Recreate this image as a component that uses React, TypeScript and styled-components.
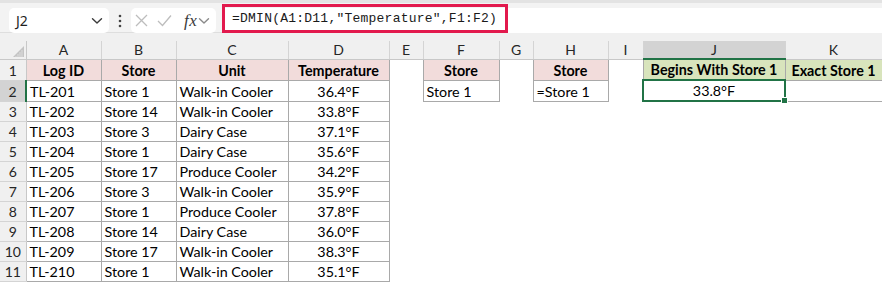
import React from "react";
import styled, { createGlobalStyle } from "styled-components";

const Global = createGlobalStyle`
  html, body { margin: 0; padding: 0; background: #ffffff; }
  body { width: 882px; height: 282px; overflow: hidden; }
`;

const Page = styled.div`
  width: 882px;
  height: 282px;
  overflow: hidden;
  background: #ffffff;
`;

const TopStrip = styled.div`
  height: 3px;
  background: #e3e3e3;
`;

const Toolbar = styled.div`
  height: 30px;
  background: #f3f3f3;
  display: flex;
  align-items: flex-start;
  padding-top: 5px;
  box-sizing: border-box;
  border-bottom: 1px solid #dedede;
`;

const NameBox = styled.div`
  margin-left: 9px;
  width: 100px;
  height: 25px;
  flex-shrink: 0;
  box-sizing: border-box;
  background: #ffffff;
  border-radius: 5px;
  display: flex;
  align-items: center;
  justify-content: space-between;
  padding: 0 6px 0 7px;
  font-family: "Noto Sans", sans-serif;
  font-size: 14px;
  color: #1f1f1f;
`;

const Dots = styled.div`
  width: 22px;
  height: 25px;
  flex-shrink: 0;
  display: flex;
  align-items: center;
  justify-content: center;
`;

const FxBox = styled.div`
  width: 85px;
  height: 25px;
  flex-shrink: 0;
  box-sizing: border-box;
  background: #ffffff;
  border-radius: 5px;
  display: flex;
  align-items: center;
  padding: 0 4px 0 4px;
  gap: 9px;
`;

const FxText = styled.span`
  font-family: "Liberation Serif", serif;
  font-style: italic;
  font-size: 17px;
  color: #3a3a3a;
  margin-left: 3px;
  letter-spacing: 0.5px;
`;

const FxChevron = styled.span`
  margin-left: -8px;
  display: flex;
`;

const FormulaArea = styled.div`
  margin-left: 7px;
  flex: 1;
  height: 25px;
  background: #ffffff;
  display: flex;
  align-items: flex-end;
`;

const Highlight = styled.div`
  height: 29px;
  margin-top: -4px;
  margin-left: -1px;
  flex-shrink: 0;
  box-sizing: border-box;
  border: 3px solid #e2194d;
  display: flex;
  align-items: center;
  padding: 0 8px 0 7px;
  font-family: "Liberation Mono", "DejaVu Sans Mono", monospace;
  font-size: 13px;
  letter-spacing: 0.23px;
  color: #1a1a1a;
  white-space: pre;
`;

const Band = styled.div`
  height: 8px;
  background: #f0f0f0;
`;

const Sheet = styled.table`
  border-collapse: collapse;
  table-layout: fixed;
  width: 882px;
  font-family: "Lato", "Liberation Sans", sans-serif;
  font-size: 14.3px;
  color: #000000;
`;

const ColHead = styled.th<{ $sel?: boolean }>`
  height: 17px;
  padding: 0;
  background: ${(p) => (p.$sel ? "#d3d3d3" : "#f0f0f0")};
  border-right: 1px solid #d4d4d4;
  border-bottom: ${(p) => (p.$sel ? "2px solid #217346" : "1px solid #c8c8c8")};
  font-weight: normal;
  font-size: 14px;
  color: #262626;
  text-align: center;
  vertical-align: middle;
`;

const Corner = styled.th`
  height: 17px;
  padding: 0;
  background: #f0f0f0;
  border-right: 1px solid #c8c8c8;
  border-bottom: 1px solid #c8c8c8;
  text-align: right;
  vertical-align: bottom;
  svg { display: block; margin: 0 2px 2px auto; }
`;

const RowHead = styled.th<{ $sel?: boolean }>`
  height: 18px;
  padding: 0 0 1px 0;
  background: ${(p) => (p.$sel ? "#d3d3d3" : "#f0f0f0")};
  border-right: ${(p) => (p.$sel ? "2px solid #217346" : "1px solid #c8c8c8")};
  border-bottom: 1px solid #d4d4d4;
  font-weight: normal;
  font-size: 14px;
  color: #262626;
  text-align: center;
  vertical-align: bottom;
`;

type Fill = "pink" | "green" | "none";

const Cell = styled.td<{ $b?: boolean; $fill?: Fill; $align?: string; $bold?: boolean; $sel?: boolean }>`
  height: 18px;
  padding: 0 3px 1px 3px;
  white-space: nowrap;
  overflow: ${(p) => (p.$sel ? "visible" : "hidden")};
  vertical-align: bottom;
  text-align: ${(p) => p.$align || "left"};
  font-weight: ${(p) => (p.$bold ? 700 : 400)};
  background: ${(p) =>
    p.$fill === "pink" ? "#f2dcdb" : p.$fill === "green" ? "#d8e4bc" : "#ffffff"};
  border: ${(p) => (p.$sel ? "2px solid #217346" : p.$b ? "1px solid #a9a9a9" : "none")};
  position: ${(p) => (p.$sel ? "relative" : "static")};
`;

const Handle = styled.span`
  position: absolute;
  right: -4px;
  bottom: -4px;
  width: 5px;
  height: 5px;
  background: #217346;
  border: 1px solid #ffffff;
`;

const widths = [26, 75, 75, 112, 101, 34, 76, 34, 75, 35, 142, 97];
const letters = ["A", "B", "C", "D", "E", "F", "G", "H", "I", "J", "K"];

const data: [string, string, string, string][] = [
  ["TL-201", "Store 1", "Walk-in Cooler", "36.4°F"],
  ["TL-202", "Store 14", "Walk-in Cooler", "33.8°F"],
  ["TL-203", "Store 3", "Dairy Case", "37.1°F"],
  ["TL-204", "Store 1", "Dairy Case", "35.6°F"],
  ["TL-205", "Store 17", "Produce Cooler", "34.2°F"],
  ["TL-206", "Store 3", "Walk-in Cooler", "35.9°F"],
  ["TL-207", "Store 1", "Produce Cooler", "37.8°F"],
  ["TL-208", "Store 14", "Dairy Case", "36.0°F"],
  ["TL-209", "Store 17", "Walk-in Cooler", "38.3°F"],
  ["TL-210", "Store 1", "Walk-in Cooler", "35.1°F"],
];

const Chevron = ({ color = "#333" }: { color?: string }) => (
  <svg width="12" height="8" viewBox="0 0 12 8">
    <path d="M1.5 1.8 L6 6 L10.5 1.8" fill="none" stroke={color} strokeWidth="1.4" strokeLinecap="round" strokeLinejoin="round" />
  </svg>
);

const App: React.FC = () => {
  return (
    <Page>
      <Global />
      <TopStrip />
      <Toolbar>
        <NameBox>
          <span>J2</span>
          <Chevron color="#3a3a3a" />
        </NameBox>
        <Dots>
          <svg width="4" height="14" viewBox="0 0 4 14">
            <circle cx="2" cy="2" r="1.3" fill="#444" />
            <circle cx="2" cy="7" r="1.3" fill="#444" />
            <circle cx="2" cy="12" r="1.3" fill="#444" />
          </svg>
        </Dots>
        <FxBox>
          <svg width="13" height="13" viewBox="0 0 13 13">
            <path d="M1 1 L12 12 M12 1 L1 12" stroke="#bdbdbd" strokeWidth="1.3" fill="none" />
          </svg>
          <svg width="15" height="13" viewBox="0 0 15 13">
            <path d="M1 7 L5.5 11.5 L14 1.5" stroke="#bdbdbd" strokeWidth="1.3" fill="none" />
          </svg>
          <FxText>fx</FxText>
          <FxChevron>
            <Chevron color="#8a8a8a" />
          </FxChevron>
        </FxBox>
        <FormulaArea>
          <Highlight>=DMIN(A1:D11,"Temperature",F1:F2)</Highlight>
        </FormulaArea>
      </Toolbar>
      <Band />
      <Sheet>
        <colgroup>
          {widths.map((w, i) => (
            <col key={i} style={{ width: w }} />
          ))}
        </colgroup>
        <thead>
          <tr>
            <Corner>
              <svg width="11" height="11" viewBox="0 0 11 11">
                <path d="M11 0 L11 11 L0 11 Z" fill="#c4c4c4" />
                <path d="M3 10 L3 11 M5 8 L5 11 M7 6 L7 11 M9 4 L9 11" stroke="#e4e4e4" strokeWidth="0.8" />
              </svg>
            </Corner>
            {letters.map((l) => (
              <ColHead key={l} $sel={l === "J"}>
                {l}
              </ColHead>
            ))}
          </tr>
        </thead>
        <tbody>
          <tr>
            <RowHead>1</RowHead>
            <Cell $b $fill="pink" $bold $align="center">Log ID</Cell>
            <Cell $b $fill="pink" $bold $align="center">Store</Cell>
            <Cell $b $fill="pink" $bold $align="center">Unit</Cell>
            <Cell $b $fill="pink" $bold $align="center">Temperature</Cell>
            <Cell />
            <Cell $b $fill="pink" $bold $align="center">Store</Cell>
            <Cell />
            <Cell $b $fill="pink" $bold $align="center">Store</Cell>
            <Cell />
            <Cell $b $fill="green" $bold $align="center">Begins With Store 1</Cell>
            <Cell $b $fill="green" $bold $align="center">Exact Store 1</Cell>
          </tr>
          {data.map((r, i) => (
            <tr key={r[0]}>
              <RowHead $sel={i === 0}>{i + 2}</RowHead>
              <Cell $b>{r[0]}</Cell>
              <Cell $b>{r[1]}</Cell>
              <Cell $b>{r[2]}</Cell>
              <Cell $b $align="center">{r[3]}</Cell>
              <Cell />
              {i === 0 ? <Cell $b>Store 1</Cell> : <Cell />}
              <Cell />
              {i === 0 ? <Cell $b>=Store 1</Cell> : <Cell />}
              <Cell />
              {i === 0 ? (
                <Cell $sel $align="center">
                  33.8°F
                  <Handle />
                </Cell>
              ) : (
                <Cell />
              )}
              {i === 0 ? <Cell $b /> : <Cell />}
            </tr>
          ))}
        </tbody>
      </Sheet>
    </Page>
  );
};

export default App;
